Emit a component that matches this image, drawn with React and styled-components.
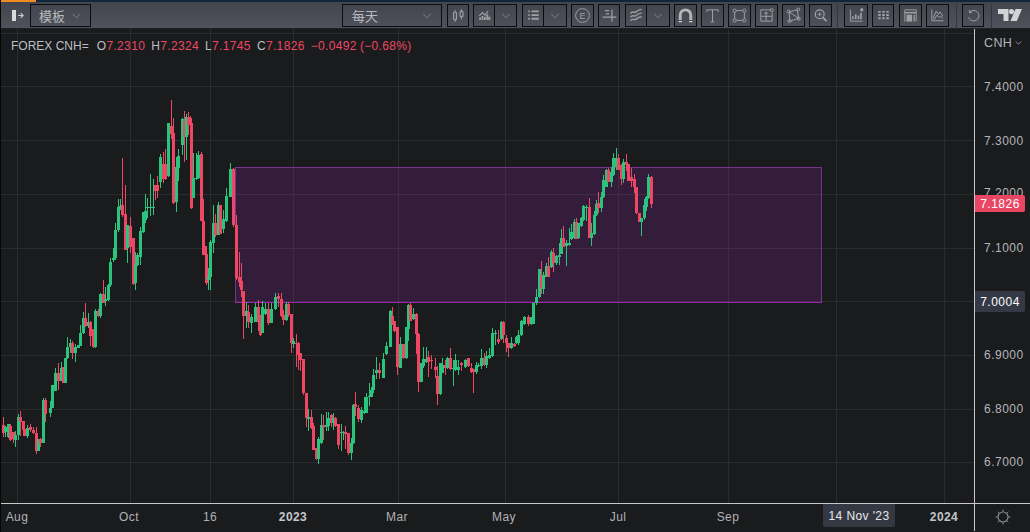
import React from "react";
import styled, { createGlobalStyle } from "styled-components";

const GlobalStyle = createGlobalStyle`
  html, body {
    margin: 0;
    padding: 0;
    background: #1a1b1d;
  }
  body {
    width: 1030px;
    height: 532px;
    overflow: hidden;
    font-family: "Liberation Sans", Arial, sans-serif;
  }
`;

const Page = styled.div`
  width: 1030px;
  height: 532px;
  display: flex;
  flex-direction: column;
  border-left: 1px solid #050505;
  box-sizing: border-box;
  overflow: hidden;
`;

const TopBand = styled.div`
  height: 2px;
  margin-left: -1px;
  background: #10263a;
`;

const TopProgress = styled.div`
  width: 36px;
  height: 2px;
  background: #f08c24;
`;

const Toolbar = styled.div`
  height: 27px;
  box-sizing: border-box;
  padding-top: 2px;
  display: flex;
  align-items: flex-start;
  gap: 4px;
  background: linear-gradient(#42454d, #4f525a);
  border-bottom: 1px solid #202124;
`;

const BackIcon = styled.div`
  width: 25px;
  height: 23px;
  box-sizing: border-box;
  padding-right: 2px;
  flex-shrink: 0;
  display: flex;
  align-items: center;
  justify-content: flex-end;
`;

const Btn = styled.div`
  width: ${(p) => p.$w || 23}px;
  height: 23px;
  box-sizing: border-box;
  margin-left: ${(p) => p.$ml || 0}px;
  display: flex;
  align-items: center;
  justify-content: center;
  flex-shrink: 0;
  border: 1px solid #0c0c0d;
  background: linear-gradient(#43464e, #4d5058);
`;

const Split = styled.div`
  display: flex;
  margin-left: ${(p) => p.$ml || 0}px;
  flex-shrink: 0;

  ${Btn} + ${Btn} {
    border-left: 0;
  }
`;

const Select = styled(Btn)`
  justify-content: space-between;
  padding: 0 ${(p) => p.$pr || 9}px 0 ${(p) => p.$pl || 8}px;
  color: #b9bbbf;
  font-family: "Noto Sans CJK SC", "Liberation Sans", sans-serif;
  font-size: 13px;
`;

const Spacer = styled.div`
  width: ${(p) => p.$w}px;
  flex-shrink: 0;
`;

const Divider = styled.div`
  width: 1px;
  height: 25px;
  flex-shrink: 0;
  margin: 0 ${(p) => p.$r || 0}px 0 ${(p) => p.$l || 0}px;
  background: #34363c;
`;

const Logo = styled.div`
  margin-left: 2px;
  height: 23px;
  flex-shrink: 0;
  display: flex;
  align-items: center;
`;

const Main = styled.div`
  flex: 1;
  display: grid;
  grid-template-columns: 973px 56px;
  grid-template-rows: 474px 28px;
`;

const Plot = styled.div`
  position: relative;
  background: #1a1b1d;
`;

const ChartSvg = styled.svg`
  display: block;
  width: 973px;
  height: 474px;
`;

const Legend = styled.div`
  position: absolute;
  left: 10px;
  top: 10px;
  display: flex;
  font-size: 12px;
  line-height: 14px;
  letter-spacing: 0.35px;
  color: #bdbfc3;
  white-space: nowrap;
`;

const LegendName = styled.span`
  margin-right: 8px;
  letter-spacing: 0;
`;

const LegendItem = styled.span`
  margin-right: ${(p) => p.$mr || 6}px;
`;

const Down = styled.span`
  color: #ee4763;
`;

const PriceAxis = styled.div`
  position: relative;
  border-left: 1px solid #c9c9c9;
  background: #1a1b1d;
`;

const Currency = styled.div`
  position: absolute;
  left: 9px;
  top: 7px;
  display: flex;
  align-items: center;
  gap: 3px;
  font-size: 12.5px;
  line-height: 14px;
  letter-spacing: 0.4px;
  color: #b4b6ba;
`;

const PriceLabel = styled.div`
  position: absolute;
  left: 9px;
  font-size: 12px;
  line-height: 14px;
  letter-spacing: 0.5px;
  color: #b4b6ba;
`;

const PriceTag = styled.div`
  position: absolute;
  left: 0;
  width: 50px;
  height: ${(p) => p.$h}px;
  top: ${(p) => p.$top}px;
  display: flex;
  align-items: center;
  justify-content: center;
  border-radius: 0 2px 2px 0;
  background: ${(p) => p.$bg};
  color: #ffffff;
  font-size: 12px;
  letter-spacing: 0.5px;
`;

const TimeAxis = styled.div`
  position: relative;
  border-top: 1px solid #c9c9c9;
  background: #1a1b1d;
`;

const TimeLabel = styled.div`
  position: absolute;
  top: 6px;
  transform: translateX(-50%);
  font-size: 12px;
  line-height: 14px;
  letter-spacing: 0.4px;
  font-weight: ${(p) => (p.$bold ? 700 : 400)};
  color: ${(p) => (p.$bold ? "#c4c6ca" : "#b0b2b6")};
`;

const CrossDate = styled.div`
  position: absolute;
  left: 822px;
  top: 0;
  width: 72px;
  height: 23px;
  display: flex;
  align-items: center;
  justify-content: center;
  border-radius: 0 0 2px 2px;
  background: #343843;
  color: #e8e9eb;
  font-size: 12px;
  letter-spacing: 0.4px;
`;

const Corner = styled.div`
  border-top: 1px solid #c9c9c9;
  border-left: 1px solid #c9c9c9;
  display: flex;
  justify-content: center;
  padding-top: 5px;
  background: #1a1b1d;
`;

// candles are read off the reference: colour, x, body top, body bottom, wick top, wick bottom
const part = (y0, rows) =>
  rows.map(([c, x, t, b, wt, wb]) => ({
    c,
    x,
    t: y0 + t / 3,
    b: y0 + b / 3,
    wt: y0 + (wt ?? t) / 3,
    wb: y0 + (wb ?? b) / 3
  }));

const candles = [
  ...part(280, [
    ["r", 3, 435, 460, 412, 472], ["g", 5, 440, 455, 438, 470], ["g", 8, 432, 470, 432, 475],
    ["r", 10, 438, 480, 432, 482], ["r", 13, 457, 478, 457, 490], ["g", 15, 465, 480, 452, 500],
    ["g", 18, 410, 465, 402, 480], ["r", 20, 410, 425, 393, 468], ["r", 23, 423, 450, 423, 468],
    ["r", 25, 448, 467], ["g", 27, 445, 467, 435, 475], ["r", 30, 442, 450, 432, 455],
    ["r", 33, 450, 460, 440, 462], ["r", 36, 460, 512, 440, 522], ["g", 38, 478, 512],
    ["r", 40, 478, 490, 475, 500], ["g", 43, 360, 488, 355, 490], ["r", 45, 360, 402, 355, 425],
    ["g", 50, 385, 398, 362, 410], ["g", 52, 315, 385], ["g", 55, 278, 332, 265, 332],
    ["r", 58, 278, 302, 250, 330], ["g", 61, 265, 302, 247, 302], ["r", 63, 262, 308],
    ["g", 65, 235, 308], ["g", 67, 200, 235, 172, 237], ["g", 70, 190, 202, 178, 220],
    ["r", 72, 190, 218, 183, 238], ["g", 75, 202, 218, 192, 245], ["g", 78, 195, 205],
    ["g", 80, 160, 197, 135, 197], ["g", 83, 115, 160, 95, 162], ["r", 85, 115, 137, 70, 140],
    ["g", 88, 125, 137, 100, 145], ["r", 90, 125, 167, 122, 197], ["r", 92, 148, 168],
    ["r", 93, 165, 200, 165, 205], ["g", 95, 93, 200, 87, 205], ["r", 98, 93, 108, 87, 110],
    ["g", 100, 42, 108, 38, 115], ["r", 103, 42, 68, 0, 70], ["g", 105, 58, 62, 22, 78],
    ["g", 108, 15, 60, 12, 62]
  ]),
  ...part(90, [
    ["g", 110, 515, 585, 505, 590], ["g", 113, 505, 510, 475, 515], ["g", 115, 420, 505, 400, 510],
    ["g", 118, 350, 420, 328, 425], ["g", 120, 348, 358, 328, 360], ["r", 122, 345, 375, 205, 380],
    ["r", 125, 372, 480, 285, 480], ["g", 127, 405, 475, 405, 518], ["r", 130, 408, 470, 380, 488],
    ["r", 133, 445, 582, 445, 585], ["g", 135, 525, 578, 485, 600], ["g", 137, 495, 525, 490, 528],
    ["g", 140, 423, 500, 410, 525], ["g", 143, 365, 425, 365, 428], ["g", 145, 363, 390, 312, 400],
    ["g", 147, 350, 353, 325, 385], ["g", 150, 350, 353, 252, 378], ["g", 153, 352, 355, 268, 375],
    ["r", 155, 285, 302, 285, 330], ["r", 157, 285, 302, 258, 325], ["g", 160, 200, 275, 192, 295],
    ["r", 163, 222, 268, 185, 280], ["r", 165, 222, 268, 178, 270], ["g", 168, 100, 258, 98, 260],
    ["r", 171, 108, 132, 30, 148], ["r", 173, 130, 340, 85, 342], ["g", 176, 232, 335, 200, 365],
    ["g", 178, 198, 233, 178, 272], ["g", 182, 88, 165, 85, 195], ["r", 184, 93, 140, 63, 215],
    ["g", 186, 80, 140, 72, 210], ["r", 188, 80, 105, 65, 135], ["r", 190, 85, 105, 78, 135],
    ["r", 191, 100, 355, 98, 357], ["g", 193, 265, 325, 190, 325], ["g", 196, 263, 268, 188, 270],
    ["g", 198, 195, 265, 183, 267], ["r", 201, 192, 392, 185, 392], ["r", 203, 392, 495, 328, 495],
    ["r", 205, 468, 492, 470, 570], ["r", 206, 492, 580, 490, 585], ["g", 208, 562, 570, 535, 600],
    ["g", 210, 455, 560, 450, 600], ["g", 213, 400, 460, 345, 490], ["r", 215, 398, 435, 372, 440],
    ["g", 218, 345, 435, 335, 435], ["r", 220, 345, 432], ["g", 223, 388, 418, 360, 430],
    ["g", 226, 318, 392, 295, 395], ["g", 230, 238, 320, 220, 320], ["r", 233, 238, 405, 235, 410],
    ["r", 236, 405, 565, 375, 570], ["r", 239, 560, 575, 487, 590], ["r", 241, 572, 600, 520, 620]
  ]),
  ...part(280, [
    ["r", 243, 33, 107, 33, 177], ["g", 246, 93, 107, 65, 145], ["r", 248, 95, 127, 75, 145],
    ["g", 251, 110, 128, 103, 158], ["g", 255, 82, 125, 68, 127], ["r", 258, 82, 125, 60, 152],
    ["r", 260, 108, 165, 105, 168], ["g", 262, 82, 158, 63, 160], ["g", 265, 88, 102, 70, 105],
    ["r", 268, 88, 130, 70, 135], ["g", 271, 88, 128, 70, 130], ["g", 275, 50, 88, 40, 90],
    ["r", 278, 48, 58, 40, 82], ["r", 281, 58, 108, 40, 110], ["r", 283, 105, 120, 90, 135],
    ["g", 286, 72, 120, 65, 122], ["r", 288, 72, 105, 65, 110], ["r", 291, 103, 190, 103, 220],
    ["g", 293, 183, 192, 175, 203], ["r", 296, 188, 190, 163, 260], ["r", 298, 188, 225, 185, 270],
    ["r", 300, 220, 240, 218, 272], ["r", 303, 237, 338, 237, 345], ["r", 306, 338, 415, 338, 440],
    ["g", 308, 410, 417, 388, 452], ["r", 311, 412, 445, 390, 448], ["r", 313, 437, 510, 430, 510],
    ["r", 316, 505, 538, 505, 540], ["g", 318, 477, 538, 470, 552], ["g", 321, 435, 490, 403, 492],
    ["r", 323, 435, 442, 405, 480], ["g", 326, 435, 440, 395, 452], ["g", 328, 415, 438, 395, 452],
    ["r", 331, 405, 430, 402, 440], ["g", 333, 415, 428, 398, 450], ["r", 335, 415, 438, 412, 440],
    ["r", 338, 432, 495, 432, 508], ["g", 341, 456, 460, 432, 512], ["g", 343, 455, 460, 453, 480],
    ["r", 345, 455, 462, 438, 508], ["r", 348, 458, 520, 458, 525], ["g", 351, 488, 518, 475, 540],
    ["g", 353, 375, 490, 372, 492], ["r", 355, 372, 382, 337, 408], ["r", 358, 385, 418, 375, 425],
    ["g", 361, 390, 420, 380, 428], ["g", 364, 392, 400, 350, 402], ["g", 366, 350, 398, 338, 400],
    ["g", 369, 348, 352, 308, 378], ["g", 371, 330, 350, 322, 352], ["g", 373, 285, 330, 268, 338],
    ["g", 376, 270, 280, 232, 298], ["r", 379, 270, 278, 250, 298], ["g", 383, 238, 293, 218, 293],
    ["g", 386, 198, 222, 185, 225], ["g", 390, 92, 200, 90, 202], ["r", 392, 108, 132, 82, 135],
    ["r", 394, 122, 153, 122, 155], ["r", 397, 140, 262, 140, 285], ["g", 400, 192, 263, 172, 265],
    ["r", 403, 192, 235, 192, 237], ["g", 406, 142, 235, 140, 237], ["g", 408, 75, 148, 72, 182],
    ["r", 410, 75, 122, 70, 124], ["g", 413, 102, 118, 85, 120], ["r", 416, 102, 162, 100, 222],
    ["r", 418, 162, 305, 160, 335], ["g", 421, 248, 305, 248, 307], ["g", 423, 238, 258, 200, 265],
    ["g", 426, 238, 245, 202, 248], ["r", 428, 232, 245, 213, 292], ["r", 431, 240, 244, 225, 268],
    ["r", 435, 262, 270, 235, 295], ["r", 437, 288, 342, 258, 375], ["g", 440, 250, 342, 250, 344],
    ["g", 442, 255, 278, 235, 280], ["r", 445, 255, 265, 240, 285], ["g", 447, 235, 265, 230, 267],
    ["r", 450, 235, 268, 205, 270], ["g", 453, 265, 268, 240, 318], ["g", 455, 240, 270, 222, 272],
    ["g", 458, 262, 270, 240, 285], ["r", 461, 248, 255, 245, 272], ["g", 465, 240, 262, 238, 264],
    ["r", 468, 235, 258, 233, 260], ["r", 471, 265, 275, 250, 278], ["r", 473, 268, 275, 268, 338],
    ["g", 476, 255, 275, 245, 282], ["g", 478, 255, 258, 250, 260], ["g", 481, 235, 258, 208, 268],
    ["r", 484, 235, 255, 220, 257], ["g", 486, 228, 255, 212, 265], ["g", 489, 225, 235, 205, 237],
    ["g", 492, 160, 228, 145, 230], ["g", 495, 158, 162, 150, 195], ["r", 498, 178, 185, 150, 192],
    ["g", 501, 125, 178, 123, 180], ["r", 503, 125, 165, 122, 188], ["r", 506, 175, 190, 165, 215],
    ["r", 508, 190, 205, 188, 230], ["g", 511, 190, 205, 172, 207], ["r", 514, 192, 198, 190, 200],
    ["g", 516, 170, 190, 168, 192], ["g", 518, 165, 188, 150, 195], ["g", 521, 122, 165, 120, 167],
    ["g", 524, 112, 132, 108, 135], ["r", 528, 112, 132, 105, 138], ["g", 531, 112, 132, 110, 135]
  ]),
  ...part(140, [
    ["g", 533, 488, 552], ["g", 536, 472, 490, 447, 495], ["g", 539, 388, 472, 388, 474],
    ["r", 541, 405, 445, 362, 462], ["g", 543, 405, 448, 395, 462], ["g", 546, 378, 410, 370, 412],
    ["r", 548, 378, 410, 350, 412], ["g", 551, 335, 382, 330, 384], ["r", 553, 340, 370, 325, 395],
    ["g", 556, 348, 368, 345, 375], ["g", 559, 345, 350, 308, 375], ["g", 561, 293, 342, 268, 342],
    ["r", 563, 293, 320, 258, 320], ["g", 566, 310, 318, 300, 378], ["g", 569, 310, 315, 265, 317],
    ["g", 571, 275, 298, 252, 300], ["g", 574, 245, 295, 238, 297], ["r", 576, 245, 297, 235, 297],
    ["g", 578, 250, 295, 248, 297], ["g", 581, 235, 258, 232, 260], ["g", 583, 197, 240, 195, 242],
    ["g", 586, 200, 205, 195, 242], ["r", 589, 200, 293, 175, 293], ["g", 591, 280, 293, 250, 318],
    ["g", 594, 225, 282, 212, 284], ["g", 596, 193, 225, 180, 227], ["r", 598, 190, 205, 155, 218],
    ["g", 601, 170, 205, 155, 215], ["g", 603, 120, 172, 105, 174], ["g", 606, 90, 140, 88, 142],
    ["r", 608, 90, 125, 85, 127], ["g", 611, 95, 125, 80, 142], ["g", 613, 55, 105, 38, 107],
    ["g", 616, 55, 80, 25, 90], ["r", 618, 55, 90, 42, 90], ["r", 621, 75, 118, 73, 135],
    ["g", 623, 65, 118, 58, 128], ["r", 626, 65, 75, 42, 92], ["r", 628, 72, 122],
    ["r", 631, 110, 122, 85, 140], ["r", 634, 118, 142, 102, 160], ["r", 636, 142, 220, 140, 222],
    ["r", 639, 220, 245, 218, 247], ["g", 641, 235, 245, 235, 288], ["g", 644, 195, 235, 178, 240],
    ["g", 646, 172, 200, 168, 212], ["g", 648, 110, 175, 102, 177], ["r", 651, 110, 192, 108, 204]
  ])
];

const COLORS = { r: "#ee4763", g: "#2bc47e" };
const gridX = [17, 130, 210, 293, 398, 505, 618, 728, 836, 944];
const gridY = [33, 86, 140, 194, 248, 301, 355, 409, 462];

const prices = [
  ["7.4000", 87],
  ["7.3000", 141],
  ["7.2000", 193],
  ["7.1000", 248],
  ["6.9000", 355],
  ["6.8000", 409],
  ["6.7000", 462]
];

const times = [
  ["Aug", 16],
  ["Oct", 128],
  ["16", 209],
  ["2023", 292, true],
  ["Mar", 396],
  ["May", 503],
  ["Jul", 617],
  ["Sep", 727],
  ["2024", 943, true]
];

const ICON = "#9fa1a5";

const Ic = ({ children }) => (
  <svg width="17" height="17" viewBox="0 0 21 21" fill="none" stroke={ICON} strokeWidth="1.2">
    {children}
  </svg>
);

const Chevron = ({ w = 10, color = "#85878c" }) => (
  <svg width={w} height="6" viewBox="0 0 11 7" fill="none" stroke={color} strokeWidth="1.1">
    <path d="M1 1l4.5 4.5L10 1" />
  </svg>
);

const CandleIcon = () => (
  <Ic>
    <rect x="4.500" y="6.500" width="3.500" height="9" rx="1" strokeWidth="1.500" />
    <path d="M6.200 3.500v3M6.200 15.500v3" />
    <rect x="12.500" y="5.500" width="3.500" height="6.500" rx="1" strokeWidth="1.500" />
    <path d="M14.200 2.500v3M14.200 12v3.500" />
  </Ic>
);

const AreaIcon = () => (
  <Ic>
    <path d="M4 11l4-4 3 3 4-5" strokeWidth="1.500" />
    <path d="M5 16v-3M8 16v-5M11 16v-4M14 16V9M16.500 16v-4" strokeWidth="2.200" />
  </Ic>
);

const ListIcon = () => (
  <Ic>
    <path d="M4 5.500h2M4 10h2M4 14.500h2M8 5.500h9M8 10h9M8 14.500h9" strokeWidth="2.200" />
  </Ic>
);

const EarningsIcon = () => (
  <svg width="17" height="17" viewBox="0 0 21 21" fill="none" stroke={ICON}>
    <circle cx="10.500" cy="10.500" r="8.500" strokeWidth="1.200" />
    <text x="10.500" y="14.500" textAnchor="middle" fontSize="11" fill={ICON} stroke="none" fontFamily="Liberation Sans">
      E
    </text>
  </svg>
);

const CrossIcon = () => (
  <Ic>
    <path d="M5 4.500h5M6 8.500h4M13.500 3v15M2 12.500h17" strokeWidth="1.500" />
  </Ic>
);

const WaveIcon = () => (
  <Ic>
    <path d="M3 8c3-4 4 0 7-2s3-3 7-3M3 12.500c3-4 4 0 7-2s3-3 7-3M3 17c3-4 4 0 7-2s3-3 7-3" strokeWidth="1.700" />
  </Ic>
);

const MagnetIcon = () => (
  <Ic>
    <path d="M4 16V10a6.500 6.500 0 0 1 13 0v6" strokeWidth="3.600" stroke="#b4b6ba" />
    <path d="M2 18h4M15 18h4" stroke="#d0d2d5" strokeWidth="1.400" />
  </Ic>
);

const TextIcon = () => (
  <Ic>
    <path d="M3.500 6V3.500h14V6M10.500 3.500v15M8 18.500h5" />
  </Ic>
);

const RectIcon = () => (
  <Ic>
    <path d="M6.500 4.500h8M6.500 16.500h8M4.500 6.500v8M16.500 6.500v8" />
    <circle cx="4.500" cy="4.500" r="2" />
    <circle cx="16.500" cy="4.500" r="2" />
    <circle cx="4.500" cy="16.500" r="2" />
    <circle cx="16.500" cy="16.500" r="2" />
  </Ic>
);

const PositionIcon = () => (
  <Ic>
    <path d="M15 3.500H3.500v14h14V7" />
    <path d="M10 17V6M7.500 8.500L10 6l2.500 2.500M4 11.500h13" />
    <circle cx="17" cy="4" r="1.800" />
  </Ic>
);

const PolyIcon = () => (
  <Ic>
    <path d="M5 6l10-2.500L17 14 6 17.500zM5 6l12 8" />
    <circle cx="4.500" cy="5.500" r="1.800" />
    <circle cx="16.500" cy="3" r="1.800" />
    <circle cx="17" cy="14.500" r="1.800" />
    <circle cx="5.500" cy="17.500" r="1.800" />
  </Ic>
);

const ZoomIcon = () => (
  <Ic>
    <circle cx="9.500" cy="9" r="5.500" strokeWidth="1.500" />
    <path d="M13.500 13l4.500 4.500" strokeWidth="2.200" />
    <path d="M9.500 6.500v5M7 9h5" />
  </Ic>
);

const BarsIcon = () => (
  <Ic>
    <path d="M3 3v14.500h15" />
    <path d="M6 15v-3.500M9.500 15V9M13 15v-4.500M16 15V7" strokeWidth="2" />
    <circle cx="17" cy="3.500" r="1.500" fill={ICON} />
  </Ic>
);

const GridIcon = () => (
  <Ic>
    <path d="M4 6h3M9 6h3M14 6h3M4 10h3M9 10h3M14 10h3M4 14h3M9 14h3M14 14h3" strokeWidth="2.400" />
  </Ic>
);

const PanelIcon = () => (
  <Ic>
    <path d="M3.500 18V3.500h14V18" />
    <path d="M3.500 7h14" strokeWidth="2" />
    <rect x="5.500" y="9.500" width="7" height="8.500" fill={ICON} stroke="none" />
    <path d="M15 9.500V18" strokeWidth="1.600" />
  </Ic>
);

const MountainIcon = () => (
  <Ic>
    <path d="M3.500 3v14h14.500" />
    <path d="M5 14l4-9 2.500 4 2-3 3.500 5M6 16l4-6 2.500 3 2-2 2.500 3" />
  </Ic>
);

const UndoIcon = () => (
  <Ic>
    <path d="M6 6.200a6.500 6.500 0 1 1-1.500 6.500" />
    <path d="M5.500 3.500v3.300h3.300" />
  </Ic>
);

const TvLogo = () => (
  <svg width="24" height="13" viewBox="0 0 24 13" fill="#d3d4d6">
    <path d="M0 0h10.500v12h-5V5H0z" />
    <circle cx="13.500" cy="2.600" r="2.600" />
    <path d="M17.500 0H24l-5.200 12h-6.300z" />
  </svg>
);

const BackGlyph = () => (
  <svg width="12" height="11" viewBox="0 0 12 11" fill="none">
    <rect x="0" y="0" width="4" height="11" fill="#d9dadc" />
    <path d="M6 5.500h5M8.800 3.200l2.300 2.300-2.300 2.300" stroke="#c8cacd" strokeWidth="1.200" />
  </svg>
);

const Gear = () => (
  <svg width="16" height="16" viewBox="0 0 16 16" fill="none" stroke="#85878c">
    <circle cx="8" cy="8" r="5" strokeWidth="1.200" />
    <path d="M8 .5v2.500M8 13v2.500M.5 8H3M13 8h2.500M2.700 2.700l1.800 1.800M11.500 11.500l1.800 1.800M13.300 2.700l-1.800 1.800M4.500 11.500l-1.800 1.800" />
  </svg>
);

const Chart = () => (
  <ChartSvg viewBox="1 29 973 474" shapeRendering="crispEdges">
    {gridY.map((y) => (
      <rect key={y} x="1" y={y} width="973" height="1" fill="#2b2c2f" />
    ))}
    {gridX.map((x) => (
      <rect key={x} x={x} y="29" width="1" height="474" fill="#2b2c2f" />
    ))}
    <rect x="235" y="167" width="587" height="135" fill="#9c27b0" fillOpacity="0.2" />
    <rect x="235" y="167" width="587" height="1" fill="#7d3190" />
    <rect x="235" y="167" width="1" height="135" fill="#7d3190" />
    <rect x="821" y="167" width="1" height="135" fill="#7d3190" />
    <rect x="235" y="302" width="587" height="1" fill="#9a28ae" />
    {candles.map((k, i) => (
      <g key={i} fill={COLORS[k.c]}>
        <rect x={k.x} y={k.wt} width="1" height={k.wb - k.wt} />
        <rect x={k.x - 1} y={k.t} width="3" height={Math.max(k.b - k.t, 1)} />
      </g>
    ))}
  </ChartSvg>
);

const App = () => (
  <Page>
    <GlobalStyle />
    <TopBand>
      <TopProgress />
    </TopBand>
    <Toolbar>
      <BackIcon>
        <BackGlyph />
      </BackIcon>
      <Select $w={61}>
        模板
        <Chevron w={9} />
      </Select>
      <Spacer $w={243} />
      <Select $w={100} $pl={9}>
        每天
        <Chevron />
      </Select>
      <Btn $ml={1} $w={22}>
        <CandleIcon />
      </Btn>
      <Split>
        <Btn $w={22}>
          <AreaIcon />
        </Btn>
        <Btn $w={22}>
          <Chevron />
        </Btn>
      </Split>
      <Split $ml={1}>
        <Btn $w={22}>
          <ListIcon />
        </Btn>
        <Btn>
          <Chevron />
        </Btn>
      </Split>
      <Btn>
        <EarningsIcon />
      </Btn>
      <Btn $w={22}>
        <CrossIcon />
      </Btn>
      <Split $ml={1}>
        <Btn $w={22}>
          <WaveIcon />
        </Btn>
        <Btn>
          <Chevron />
        </Btn>
      </Split>
      <Btn>
        <MagnetIcon />
      </Btn>
      <Btn>
        <TextIcon />
      </Btn>
      <Btn>
        <RectIcon />
      </Btn>
      <Btn>
        <PositionIcon />
      </Btn>
      <Btn>
        <PolyIcon />
      </Btn>
      <Btn>
        <ZoomIcon />
      </Btn>
      <Divider $l={1} $r={2} />
      <Btn $w={24}>
        <BarsIcon />
      </Btn>
      <Btn $w={22}>
        <GridIcon />
      </Btn>
      <Btn $ml={1}>
        <PanelIcon />
      </Btn>
      <Btn>
        <MountainIcon />
      </Btn>
      <Divider $l={3} $r={1} />
      <Btn $w={22}>
        <UndoIcon />
      </Btn>
      <Divider $l={3} />
      <Logo>
        <TvLogo />
      </Logo>
    </Toolbar>
    <Main>
      <Plot>
        <Chart />
        <Legend>
          <LegendName>FOREX CNH=</LegendName>
          <LegendItem>
            O<Down>7.2310</Down>
          </LegendItem>
          <LegendItem>
            H<Down>7.2324</Down>
          </LegendItem>
          <LegendItem>
            L<Down>7.1745</Down>
          </LegendItem>
          <LegendItem>
            C<Down>7.1826</Down>
          </LegendItem>
          <LegendItem $mr={3}>
            <Down>−0.0492</Down>
          </LegendItem>
          <Down>(−0.68%)</Down>
        </Legend>
      </Plot>
      <PriceAxis>
        <Currency>
          CNH
          <Chevron w={7} color="#b4b6ba" />
        </Currency>
        {prices.map(([label, y]) => (
          <PriceLabel key={label} style={{ top: y - 29 - 7 }}>
            {label}
          </PriceLabel>
        ))}
        <PriceTag $top={166} $h={17} $bg="#e94663">
          7.1826
        </PriceTag>
        <PriceTag $top={262} $h={21} $bg="#353945">
          7.0004
        </PriceTag>
      </PriceAxis>
      <TimeAxis>
        {times.map(([label, x, bold]) => (
          <TimeLabel key={label} $bold={bold} style={{ left: x }}>
            {label}
          </TimeLabel>
        ))}
        <CrossDate>14 Nov '23</CrossDate>
      </TimeAxis>
      <Corner>
        <Gear />
      </Corner>
    </Main>
  </Page>
);

export default App;
